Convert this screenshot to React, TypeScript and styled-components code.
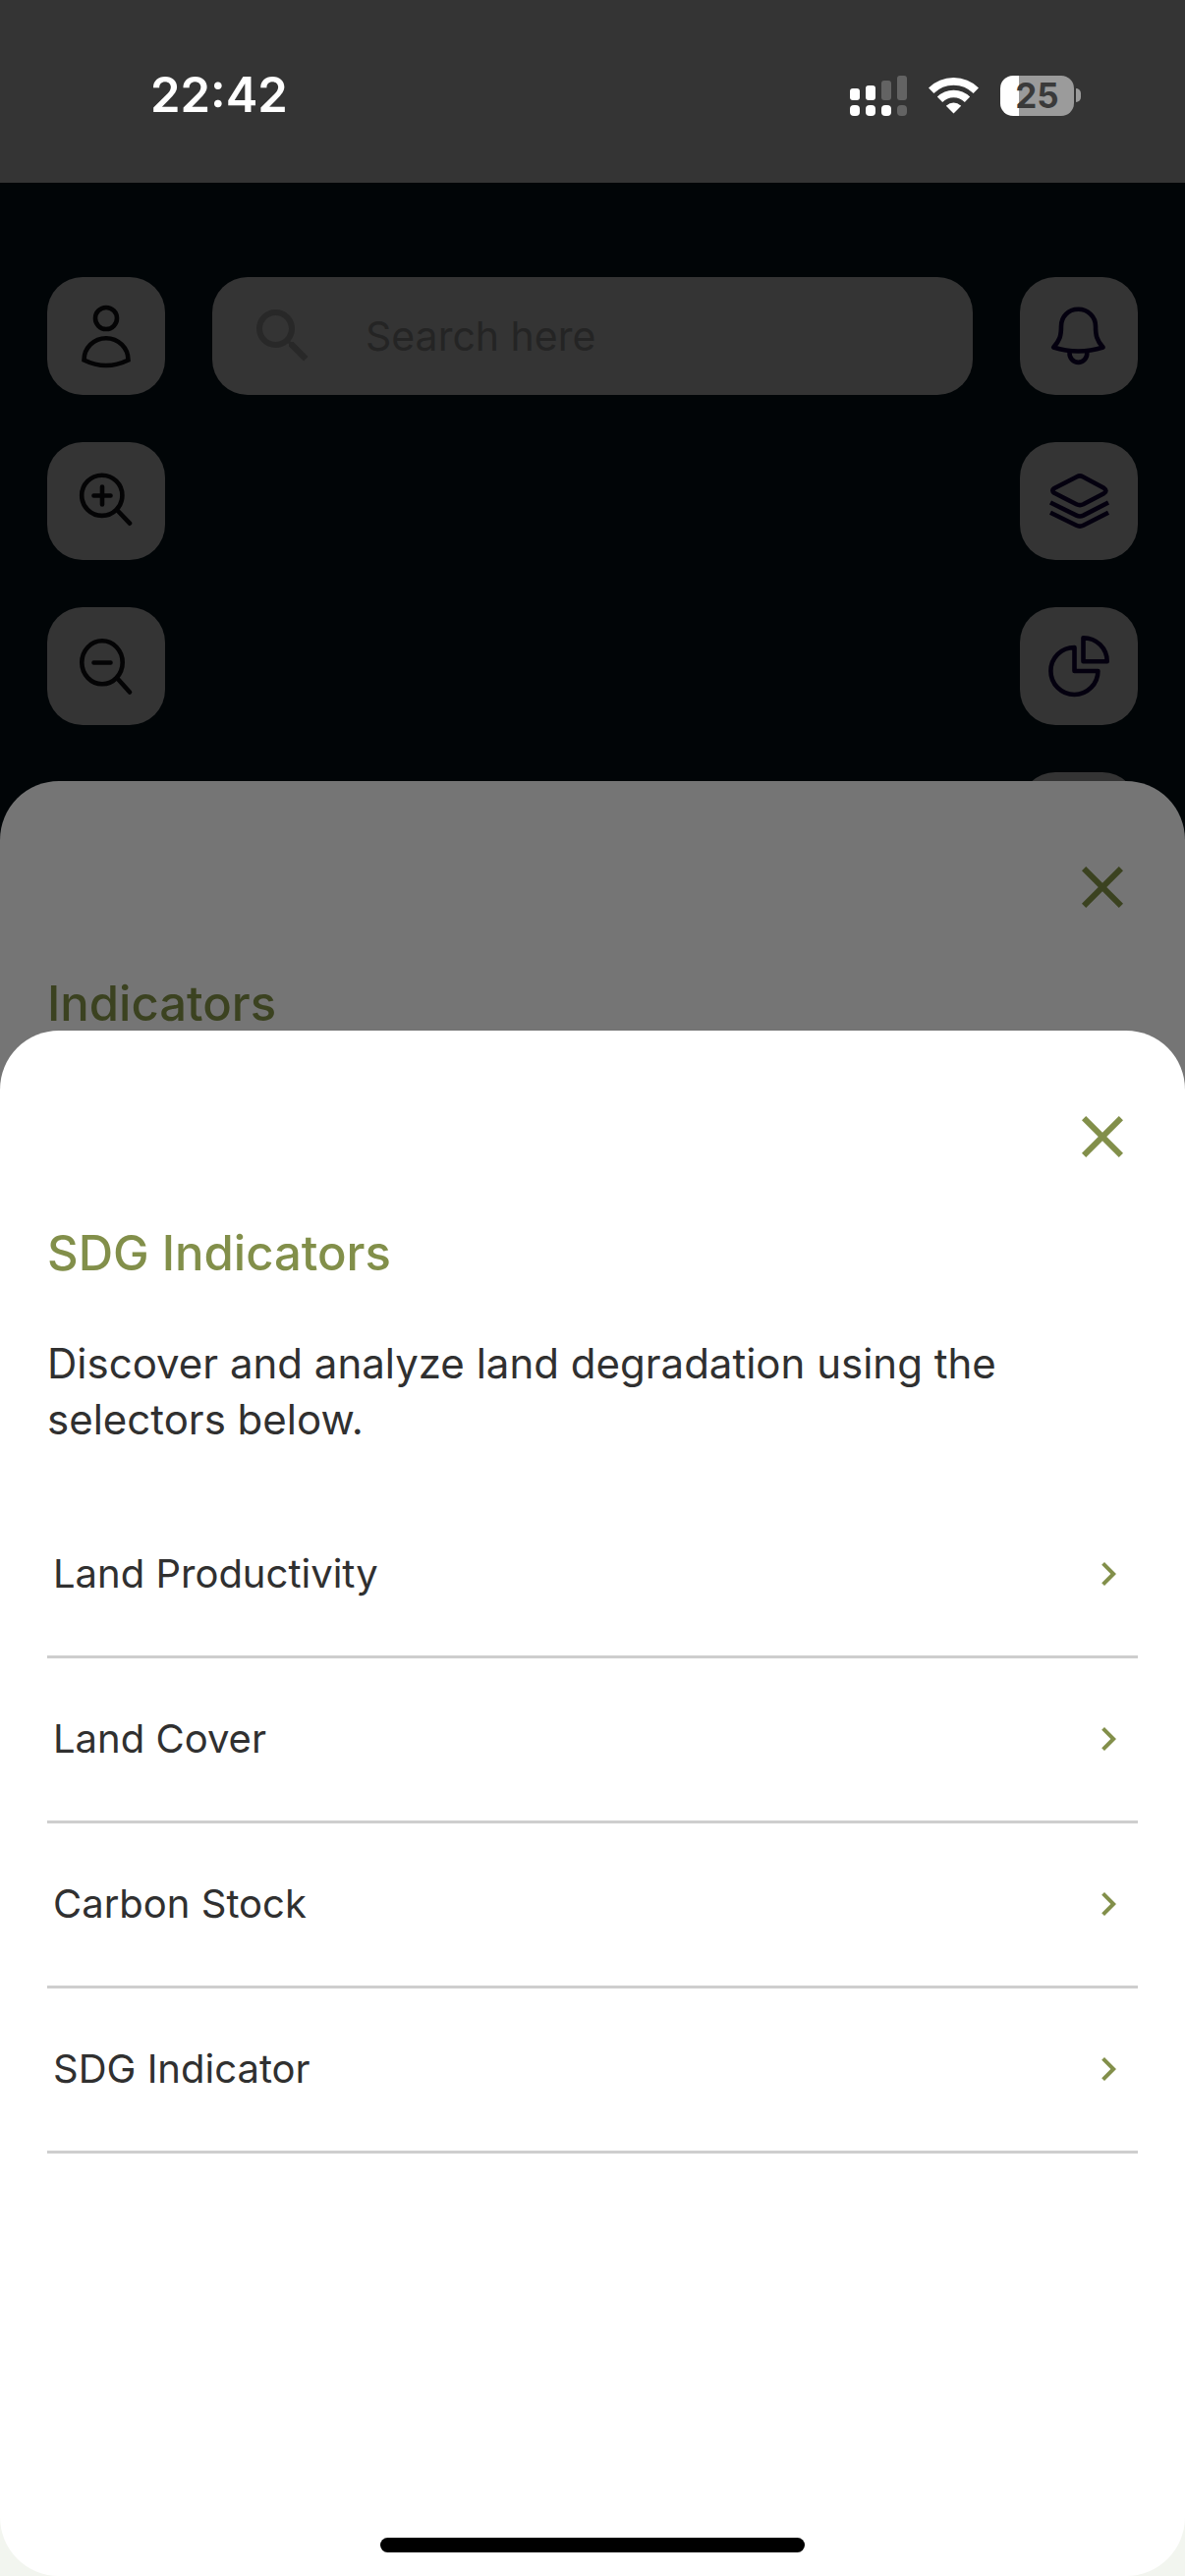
import React from "react";
import styled, { createGlobalStyle } from "styled-components";
import { MdChevronRight, MdClose, MdSearch } from "react-icons/md";

const GlobalStyle = createGlobalStyle`
  *, *::before, *::after { box-sizing: border-box; }
  body { margin: 0; background: #010507; }
  button, input { font: inherit; color: inherit; border: 0; padding: 0; }
  button { cursor: pointer; }
`;

const Screen = styled.div`
  position: relative;
  display: flex;
  flex-direction: column;
  height: 100vh;
  overflow: hidden;
  background: #010507;
  color: #303030;
  font-family: Inter, "Liberation Sans", sans-serif;
`;

const StatusBar = styled.header`
  display: flex;
  align-items: center;
  justify-content: space-between;
  padding: 66px 106px 58px 153px;
  background: #343434;
  color: #ffffff;
`;

const Clock = styled.time`
  font-size: 49px;
  line-height: 62px;
  font-weight: 600;
`;

const StatusIcons = styled.div`
  display: flex;
  align-items: center;
  gap: 22px;
`;

const Battery = styled.div`
  display: flex;
  align-items: center;
  gap: 2px;
`;

const BatteryBody = styled.div`
  display: flex;
  align-items: center;
  justify-content: center;
  width: 75px;
  height: 41px;
  border-radius: 13px;
  background: linear-gradient(to right, #ffffff 25%, #9b9b9b 25%);
  color: #3a3a3a;
  font-size: 35px;
  line-height: 41px;
  font-weight: 700;
`;

const BatteryTip = styled.div`
  width: 5px;
  height: 14px;
  border-radius: 0 7px 7px 0;
  background: #9b9b9b;
`;

const MapArea = styled.main`
  display: grid;
  grid-template-columns: 120px minmax(0, 1fr) 120px;
  align-items: start;
  column-gap: 48px;
  padding: 96px 48px 0;
`;

const Tools = styled.nav`
  display: flex;
  flex-direction: column;
  gap: 48px;
`;

const ToolButton = styled.button<{ $ink: string }>`
  display: block;
  width: 120px;
  height: 120px;
  border-radius: 36px;
  background: #343434;
  color: ${(p) => p.$ink};

  svg { display: block; }
`;

const SearchBox = styled.label`
  display: flex;
  align-items: center;
  gap: 48px;
  height: 120px;
  padding: 0 36px;
  border-radius: 36px;
  background: #343434;
  color: #282828;

  svg { flex: none; }
`;

const SearchInput = styled.input`
  flex: 1;
  min-width: 0;
  background: transparent;
  font-size: 41px;
  line-height: 48px;
  outline: none;

  &::placeholder { color: #242424; opacity: 1; }
`;

const SheetStack = styled.div`
  position: absolute;
  left: 0;
  right: 0;
  bottom: 0;
  border-radius: 60px 60px 0 0;
  background: linear-gradient(#757575 50%, #f2f5ef 50%);
`;

const BackSheet = styled.section`
  height: 254px;
  padding: 72px 48px 0;
  color: #3b4220;
`;

const FrontSheet = styled.section`
  position: relative;
  display: flex;
  flex-direction: column;
  height: 60vh;
  padding: 72px 48px 24px;
  border-radius: 60px;
  background: #ffffff;
  color: #828f4a;
`;

const CloseButton = styled.button`
  display: block;
  width: 72px;
  height: 72px;
  margin-left: auto;
  background: transparent;

  svg { display: block; }
`;

const SheetTitle = styled.h2`
  margin: 54px 0 0;
  font-size: 49px;
  line-height: 58px;
  font-weight: 500;
`;

const Intro = styled.p`
  margin: 54px 0 47px;
  color: #303030;
  font-size: 42px;
  line-height: 57px;
`;

const IndicatorList = styled.ul`
  margin: 0;
  padding: 0;
  list-style: none;
`;

const IndicatorRow = styled.button`
  display: flex;
  align-items: center;
  justify-content: space-between;
  width: 100%;
  height: 168px;
  padding: 0 6px;
  border-bottom: 3px solid #cecece;
  background: transparent;
  text-align: left;
`;

const IndicatorName = styled.span`
  color: #303030;
  font-size: 40px;
  line-height: 48px;
`;

const HomeIndicator = styled.div`
  width: 432px;
  height: 15px;
  margin: auto auto 0;
  border-radius: 8px;
  background: #000000;
`;

const INK = "#040405";
const NAVY = "#04000f";

function ToolIcon({ children }: { children?: React.ReactNode }) {
  return (
    <svg
      width="120"
      height="120"
      viewBox="0 0 120 120"
      fill="none"
      stroke="currentColor"
      strokeWidth="4.6"
      strokeLinecap="round"
      strokeLinejoin="round"
      aria-hidden="true"
    >
      {children}
    </svg>
  );
}

const leftTools = [
  {
    label: "Profile",
    icon: (
      <>
        <circle cx="60" cy="42" r="11" />
        <path strokeLinejoin="miter" d="M37.5 84.5A22.5 22.3 0 0 1 82.5 84.5Q60 95.5 37.5 84.5z" />
      </>
    ),
  },
  {
    label: "Zoom in",
    icon: (
      <>
        <circle cx="55.8" cy="54.3" r="20.6" />
        <path d="M71 69L84 82.7M47.5 54.5h17M56 45.5v18" />
      </>
    ),
  },
  {
    label: "Zoom out",
    icon: (
      <>
        <ellipse cx="56" cy="56.3" rx="20.7" ry="22" />
        <path d="M71 72L84 86.5M47.5 56.5h17" />
      </>
    ),
  },
];

const rightTools = [
  {
    label: "Notifications",
    icon: (
      <>
        <path d="M59.3 32.8C49 32.8 42 40.5 42 50C42 60 40.5 64.5 34.2 71.5Q59.3 79.5 84.6 71.5C78 64.5 77 59 77 50C77 40.5 69.5 32.8 59.3 32.8z" />
        <path d="M50.5 77.5a8.9 9.4 0 0 0 17.8 0" />
      </>
    ),
  },
  {
    label: "Layers",
    icon: (
      <>
        <path d="M58 35.2Q61 33.6 64 35.2L85.5 46.8Q89.5 49.5 85.5 52.2L64.5 63.3Q61 65 57.5 63.3L35 51.8Q31.5 49.3 35 47z" />
        <path strokeLinecap="butt" d="M31 61.5L57.5 74.6Q61 76.3 64.5 74.6L90 61.5M31 71.8L57.5 84.8Q61 86.5 64.5 84.8L90 71.8" />
      </>
    ),
  },
  {
    label: "Statistics",
    icon: (
      <>
        <path d="M55.5 41V65H79.4A24 24 0 1 1 55.5 41z" />
        <path d="M64.5 31.2V55.2H88.7A24.2 24 0 0 0 64.5 31.2z" />
      </>
    ),
  },
  { label: "More", icon: null },
];

const indicators = ["Land Productivity", "Land Cover", "Carbon Stock", "SDG Indicator"];

function Signal() {
  return (
    <svg width="58" height="41" viewBox="0 0 58 41" fill="#fff" aria-hidden="true">
      <rect x="0" y="13" width="10" height="12" rx="3" />
      <rect x="16" y="10" width="10" height="15" rx="3" />
      <rect x="32" y="5" width="10" height="20" rx="3" fill="#636363" />
      <rect x="48" y="0" width="10" height="25" rx="3" fill="#636363" />
      <rect x="0" y="30" width="10" height="11" rx="4" />
      <rect x="16" y="30" width="10" height="11" rx="4" />
      <rect x="32" y="30" width="10" height="11" rx="4" />
      <rect x="48" y="30" width="10" height="11" rx="4" fill="#636363" />
    </svg>
  );
}

function Wifi() {
  return (
    <svg width="51" height="37" viewBox="0 0 51 37" fill="none" stroke="#fff" strokeWidth="7.6" aria-hidden="true">
      <path d="M2.7 13.3A32.3 32.3 0 0 1 48.3 13.3" />
      <path d="M11.5 22.3A19.8 19.8 0 0 1 39.5 22.3" />
      <path fill="#fff" stroke="none" d="M25.5 36.5L17.8 28.7Q25.5 22.5 33.2 28.7z" />
    </svg>
  );
}

function SheetHeader({ title }: { title: string }) {
  return (
    <>
      <CloseButton type="button" aria-label={`Close ${title}`}>
        <MdClose size={72} />
      </CloseButton>
      <SheetTitle>{title}</SheetTitle>
    </>
  );
}

export default function App() {
  return (
    <>
      <GlobalStyle />
      <Screen>
        <StatusBar>
          <Clock>22:42</Clock>
          <StatusIcons>
            <Signal />
            <Wifi />
            <Battery>
              <BatteryBody>25</BatteryBody>
              <BatteryTip />
            </Battery>
          </StatusIcons>
        </StatusBar>

        <MapArea>
          <Tools aria-label="Map view">
            {leftTools.map((tool) => (
              <ToolButton key={tool.label} type="button" aria-label={tool.label} $ink={INK}>
                <ToolIcon>{tool.icon}</ToolIcon>
              </ToolButton>
            ))}
          </Tools>
          <SearchBox>
            <MdSearch size={72} aria-hidden="true" />
            <SearchInput type="search" placeholder="Search here" aria-label="Search here" />
          </SearchBox>
          <Tools aria-label="Map tools">
            {rightTools.map((tool) => (
              <ToolButton key={tool.label} type="button" aria-label={tool.label} $ink={NAVY}>
                <ToolIcon>{tool.icon}</ToolIcon>
              </ToolButton>
            ))}
          </Tools>
        </MapArea>

        <SheetStack>
          <BackSheet>
            <SheetHeader title="Indicators" />
          </BackSheet>
          <FrontSheet>
            <SheetHeader title="SDG Indicators" />
            <Intro>Discover and analyze land degradation using the selectors below.</Intro>
            <IndicatorList>
              {indicators.map((name) => (
                <li key={name}>
                  <IndicatorRow type="button">
                    <IndicatorName>{name}</IndicatorName>
                    <MdChevronRight size={48} aria-hidden="true" />
                  </IndicatorRow>
                </li>
              ))}
            </IndicatorList>
            <HomeIndicator />
          </FrontSheet>
        </SheetStack>
      </Screen>
    </>
  );
}
